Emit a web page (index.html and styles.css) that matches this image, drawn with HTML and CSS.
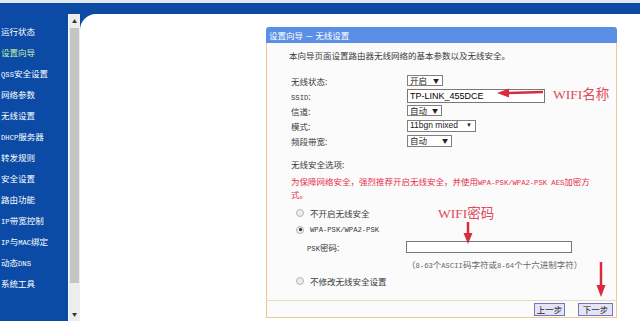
FILE: index.html
```html
<!DOCTYPE html>
<html lang="zh-CN">
<head>
    <meta charset="UTF-8">
    <title>设置向导 - 无线设置</title>
    <link rel="stylesheet" href="styles.css">
</head>
<body>
    <div class="topline"></div>
    <div class="wrap">
        <ul class="menu">
            <li>运行状态</li>
            <li class="on">设置向导</li>
            <li><span class="en">QSS</span>安全设置</li>
            <li>网络参数</li>
            <li>无线设置</li>
            <li><span class="en">DHCP</span>服务器</li>
            <li>转发规则</li>
            <li>安全设置</li>
            <li>路由功能</li>
            <li><span class="en">IP</span>带宽控制</li>
            <li><span class="en">IP</span>与<span class="en">MAC</span>绑定</li>
            <li>动态<span class="en">DNS</span></li>
            <li>系统工具</li>
        </ul>
        <div class="scrollbar">
            <div class="sb-btn">▲</div>
            <div class="sb-thumb"></div>
            <div class="sb-track"></div>
            <div class="sb-btn">▼</div>
        </div>
        <div class="main">
            <div class="dlg">
                <div class="dlg-head">设置向导 － 无线设置</div>
                <div class="dlg-body">
                    <p class="intro">本向导页面设置路由器无线网络的基本参数以及无线安全。</p>
                    <div class="rows">
                        <div class="row"><span class="lbl">无线状态:</span><span class="sel w36">开启<i>▼</i></span></div>
                        <div class="row"><span class="lbl"><span class="en">SSID</span>:</span><input class="txt ssid" type="text" value="TP-LINK_455DCE"></div>
                        <div class="row"><span class="lbl">信道:</span><span class="sel w35">自动<i>▼</i></span></div>
                        <div class="row"><span class="lbl">模式:</span><span class="sel w69 latin">11bgn mixed<i>▼</i></span></div>
                        <div class="row"><span class="lbl">频段带宽:</span><span class="sel w45">自动<i>▼</i></span></div>
                    </div>
                    <p class="sec-title">无线安全选项:</p>
                    <p class="warn">为保障网络安全，强烈推荐开启无线安全，并使用<span class="en">WPA-PSK/WPA2-PSK AES</span>加密方<br>式。</p>
                    <div class="opt first"><span class="radio"></span>不开启无线安全</div>
                    <div class="opt"><span class="radio checked"></span><span class="en">WPA-PSK/WPA2-PSK</span></div>
                    <div class="psk-row"><span class="lbl2"><span class="en">PSK</span>密码:</span><input class="txt psk" type="password"></div>
                    <p class="hint">（<span class="en">8-63</span>个<span class="en">ASCII</span>码字符或<span class="en">8-64</span>个十六进制字符）</p>
                    <div class="opt"><span class="radio"></span>不修改无线安全设置</div>
                </div>
                <div class="dlg-foot">
                    <button class="btn w31">上一步</button>
                    <button class="btn w35">下一步</button>
                </div>

                <span class="note note1">WIFI名称</span>
                <span class="note note2">WIFI密码</span>
                <svg class="arrows" width="351" height="291" viewBox="0 0 351 291">
                    <line x1="277" y1="65" x2="240" y2="66" />
                    <polygon points="231,66 243,61.5 243,70.5" />
                    <line x1="202" y1="195" x2="202" y2="208" />
                    <polygon points="202,217 197.5,206 206.5,206" />
                    <line x1="335" y1="235" x2="335" y2="259" />
                    <polygon points="335,270 330.5,258 339.5,258" />
                </svg>
            </div>
        </div>
    </div>
</body>
</html>
```

FILE: styles.css
```css
body {
    margin: 0;
    width: 640px;
    height: 321px;
    overflow: hidden;
    background-color: #e6e6e6;
    font-family: "Noto Sans CJK SC", sans-serif;
    font-size: 8.5px;
}
.en {
    font-family: "Liberation Mono", monospace;
    font-size: 7.2px;
}
.topline {
    height: 3px;
    background-color: #e2e8ee;
}
.wrap {
    display: flex;
    height: 318px;
    background-color: #0b4ba6;
}
.menu {
    width: 68px;
    margin: 0;
    padding: 18px 0 0 1px;
    box-sizing: border-box;
    list-style: none;
    color: #fff;
}
.menu li {
    height: 21px;
    line-height: 21px;
    white-space: nowrap;
}
.menu li.on {
    color: #c9f2a6;
}
.scrollbar {
    width: 12px;
    margin-top: 11px;
    display: flex;
    flex-direction: column;
    background-color: #ededed;
    border-left: 1px solid #f4f8fc;
    box-sizing: border-box;
}
.sb-btn {
    height: 14px;
    line-height: 14px;
    text-align: center;
    font-size: 5px;
    color: #333;
}
.sb-thumb {
    height: 255px;
    margin: 0 1px;
    background-color: #c4c4c4;
}
.sb-track {
    flex: 1;
}
.main {
    flex: 1;
    margin-top: 11px;
    background-color: #fff;
    border-top-left-radius: 16px;
}
.dlg {
    position: relative;
    width: 351px;
    margin: 13px 0 0 186px;
}
.dlg-head {
    height: 16px;
    line-height: 16px;
    padding-left: 3px;
    background-color: #5b8fe6;
    color: #fff;
    border-radius: 3px 3px 0 0;
}
.dlg-body {
    height: 257px;
    box-sizing: border-box;
    padding: 7px 0 0 22px;
    background-color: #fbfbfb;
    border-left: 1px solid #f0c890;
    border-right: 1px solid #f0c890;
    color: #3a3a3a;
}
.dlg-body p {
    margin: 0;
    line-height: 11px;
    white-space: nowrap;
}
.rows {
    margin-top: 12px;
}
.row {
    display: flex;
    align-items: center;
    height: 15px;
}
.lbl {
    width: 116px;
    padding-left: 2px;
}
.sel {
    display: flex;
    align-items: center;
    justify-content: space-between;
    height: 11px;
    box-sizing: border-box;
    padding: 0 3px 0 2px;
    border: 1px solid #808080;
    background-color: #fff;
    color: #222;
    line-height: 9px;
}
.sel i {
    font-style: normal;
    font-size: 6px;
}
.sel.latin {
    font-family: "Liberation Sans", sans-serif;
    font-size: 8.5px;
    height: 12px;
}
.w35 { width: 35px; }
.w36 { width: 36px; }
.w45 { width: 45px; height: 12px; }
.w69 { width: 69px; }
.txt {
    box-sizing: border-box;
    margin: 0;
    padding: 0 2px;
    border: 1px solid #777;
    background-color: #fff;
    color: #000;
    font: 9px "Liberation Sans", sans-serif;
    outline: none;
}
.ssid {
    width: 138px;
    height: 14px;
}
.psk {
    width: 166px;
    height: 12px;
}
.dlg-body .sec-title {
    margin: 11px 0 0 2px;
}
.dlg-body .warn {
    margin: 6px 0 0 2px;
    color: #e8304a;
}
.opt {
    display: flex;
    align-items: center;
    height: 17px;
    padding-left: 7px;
}
.opt.first {
    margin-top: 4px;
}
.radio {
    position: relative;
    width: 8px;
    height: 8px;
    box-sizing: border-box;
    margin-right: 6px;
    border: 1px solid #b4b4b4;
    border-radius: 50%;
    background-color: #ececec;
}
.radio.checked::after {
    content: "";
    position: absolute;
    left: 1.5px;
    top: 1.5px;
    width: 3px;
    height: 3px;
    border-radius: 50%;
    background-color: #222;
}
.psk-row {
    display: flex;
    align-items: center;
    height: 12px;
    margin-top: 3px;
}
.lbl2 {
    width: 99px;
    padding-left: 18px;
}
.dlg-body .hint {
    margin: 6px 0 0 118px;
    color: #666;
}
.dlg-foot {
    display: flex;
    justify-content: flex-end;
    align-items: center;
    gap: 13px;
    height: 18px;
    box-sizing: border-box;
    padding-right: 3px;
    background-color: #fbfbfb;
    border: 1px solid #f0c890;
    border-top-color: #eadbbd;
}
.btn {
    height: 13px;
    padding: 0;
    border: 1px solid #7474c4;
    background-color: #e4e4f6;
    color: #222;
    font-family: inherit;
    font-size: 8.5px;
    line-height: 11px;
}
.w31 { width: 31px; }
.note {
    position: absolute;
    line-height: 16px;
    font-family: "Liberation Serif", "Noto Sans CJK SC", serif;
    font-size: 13.5px;
    color: #e04a5c;
    white-space: nowrap;
}
.note1 {
    left: 287px;
    top: 60px;
}
.note2 {
    left: 172px;
    top: 179px;
}
.arrows {
    position: absolute;
    left: 0;
    top: 0;
    pointer-events: none;
}
.arrows line {
    stroke: #d82c3c;
    stroke-width: 2.5;
}
.arrows polygon {
    fill: #d82c3c;
}
```
